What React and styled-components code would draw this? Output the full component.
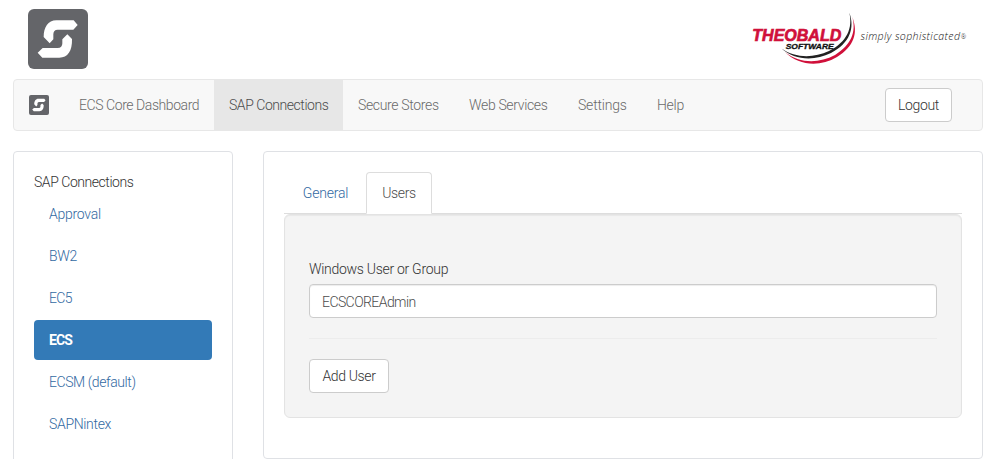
import React from "react";
import styled, { createGlobalStyle, css } from "styled-components";

const GlobalStyle = createGlobalStyle`
  *, *::before, *::after { box-sizing: border-box; }
  body {
    margin: 0;
    background: #fff;
    color: #333;
    font-family: "Roboto", "Liberation Sans", sans-serif;
    font-size: 14px;
    font-weight: 300;
    line-height: 20px;
    overflow: hidden;
  }
`;

const Page = styled.div`
  width: 970px;
  height: 459px;
  margin-left: 13px;
  overflow: hidden;
`;

const Header = styled.header`
  display: flex;
  justify-content: space-between;
  height: 79px;
  padding: 9px 0 0 15px;
`;

const LogoSvg = styled.svg`
  display: block;
  flex: none;
  width: ${(p) => p.$size}px;
  height: ${(p) => p.$size}px;
`;

const BrandSvg = styled.svg`
  display: block;
  width: 233px;
  height: 62px;
`;

const Label = styled.span`
  letter-spacing: ${(p) => p.$track || 0}px;
  white-space: nowrap;
`;

const NavBar = styled.nav`
  display: flex;
  align-items: stretch;
  height: 52px;
  padding: 0 30px 0 15px;
  border: 1px solid #e7e7e7;
  border-radius: 4px;
  background: #f8f8f8;
`;

const NavBrand = styled.a`
  display: flex;
  align-items: center;
  width: 35px;
`;

const NavItem = styled.a`
  display: flex;
  align-items: center;
  width: ${(p) => p.$width}px;
  padding-left: 15px;
  color: ${(p) => (p.$active ? "#4c4c4c" : "#6a6a6a")};
  background: ${(p) => (p.$active ? "#e7e7e7" : "transparent")};
`;

const Button = styled.button`
  height: 34px;
  width: ${(p) => p.$width}px;
  padding: 0;
  border: 1px solid #ccc;
  border-radius: 4px;
  background: #fff;
  color: #333;
  font: inherit;
`;

const LogoutButton = styled(Button)`
  margin: 8px 0 0 auto;
`;

const Columns = styled.div`
  display: flex;
  align-items: flex-start;
  gap: 30px;
  padding-top: 20px;
`;

const panel = css`
  border: 1px solid #dfe1e5;
  border-radius: 4px;
  background: #fff;
`;

const Sidebar = styled.aside`
  ${panel}
  width: 220px;
  height: 340px;
  padding: 20px;
`;

const SidebarTitle = styled.div`
  height: 22px;
`;

const SideItem = styled.a`
  display: flex;
  align-items: center;
  height: 40px;
  margin-bottom: 2px;
  padding-left: 15px;
  border-radius: 4px;
  color: ${(p) => (p.$active ? "#fff" : "#3269a2")};
  background: ${(p) => (p.$active ? "#337ab7" : "transparent")};
  font-weight: ${(p) => (p.$active ? 700 : 300)};
`;

const Main = styled.main`
  ${panel}
  width: 720px;
  height: 308px;
  padding: 20px;
`;

const Tabs = styled.div`
  display: flex;
  height: 42px;
  padding-left: 1px;
  border-bottom: 1px solid #ddd;
`;

const Tab = styled.a`
  display: flex;
  align-items: center;
  justify-content: center;
  height: 42px;
  width: ${(p) => p.$width}px;
  border: 1px solid transparent;
  border-radius: 4px 4px 0 0;
  color: #3269a2;
  ${(p) =>
    p.$active &&
    css`
      color: #4c4c4c;
      background: #fff;
      border-color: #ddd #ddd #fff;
    `}
`;

const Well = styled.section`
  height: 204px;
  padding: 44px 24px 24px;
  border: 1px solid #e3e3e3;
  border-radius: 6px;
  background: #f4f4f4;
  box-shadow: inset 0 1px 1px rgba(0, 0, 0, 0.05);
`;

const FieldLabel = styled.label`
  display: block;
  margin-bottom: 5px;
`;

const Input = styled.input`
  display: block;
  width: 100%;
  height: 34px;
  padding: 2px 12px 0;
  border: 1px solid #ccc;
  border-radius: 4px;
  background: #fff;
  box-shadow: inset 0 1px 1px rgba(0, 0, 0, 0.075);
  color: #4c4c4c;
  font: inherit;
  letter-spacing: -0.58px;
`;

const Divider = styled.hr`
  margin: 20px 0;
  border: 0;
  border-top: 1px solid #ececec;
`;

function Logo({ size }) {
  return (
    <LogoSvg $size={size} viewBox="0 0 180 180" aria-label="ECS Core">
      <rect width="180" height="180" rx="18" fill="#646569" />
      <g fill="#fff">
        <path d="M65 103 L47 84 C47 55 60 34 85 34 H137 L149 48 L136 62 H89 Q76 62 76 76 V91 Z" />
        <path d="M118 76 L132 90 C133 126 119 146 94 146 H43 L29 131 L44 117 H89 Q103 117 103 103 V91 Z" />
      </g>
    </LogoSvg>
  );
}

function TheobaldBrand() {
  return (
    <BrandSvg viewBox="750 9 233 62" aria-label="Theobald Software">
      <path
        d="M849.3 12.5 C855 28 850 43 831 53 C814 61.5 794 60 781.5 48.5 C795 58 813 58.5 829 51 C847 42 853 28 849.3 12.5Z"
        fill="#222"
      />
      <path
        d="M852.3 17 C858.5 33 854 46.5 837 57 C820 67 799 66 785 52 C800 64 819 63.5 835 55 C851 45 856.5 32 852.3 17Z"
        fill="#d0103a"
      />
      <g fontFamily="Liberation Sans" fontWeight="700" fontStyle="italic">
        <text x="752.3" y="41.2" fontSize="16.5" fill="#d0103a" stroke="#d0103a" strokeWidth="0.7" textLength="89" lengthAdjust="spacingAndGlyphs">
          THEOBALD
        </text>
        <text x="785.7" y="49.1" fontSize="7" fill="#111" stroke="#111" strokeWidth="0.3" textLength="48" lengthAdjust="spacingAndGlyphs">
          SOFTWARE
        </text>
      </g>
      <g fontFamily="Open Sans" fontStyle="italic" fill="#111">
        <text x="860.5" y="40.2" fontSize="10.6" textLength="99.5">
          simply sophisticated
        </text>
        <text x="960.8" y="38.5" fontSize="6.5">®</text>
      </g>
    </BrandSvg>
  );
}

const navItems = [
  { text: "ECS Core Dashboard", width: 150, track: -0.43 },
  { text: "SAP Connections", width: 129, track: -0.45, active: true },
  { text: "Secure Stores", width: 111, track: -0.34 },
  { text: "Web Services", width: 109, track: -0.34 },
  { text: "Settings", width: 79, track: -0.2 },
  { text: "Help", width: 57, track: -0.3 },
];

const connections = [
  { text: "Approval", track: -0.25 },
  { text: "BW2", track: -0.3 },
  { text: "EC5", track: -0.7 },
  { text: "ECS", track: -0.9, active: true },
  { text: "ECSM (default)", track: -0.42 },
  { text: "SAPNintex", track: -0.33 },
];

export default function App() {
  return (
    <>
      <GlobalStyle />
      <Page>
        <Header>
          <Logo size={60} />
          <TheobaldBrand />
        </Header>
        <NavBar>
          <NavBrand>
            <Logo size={20} />
          </NavBrand>
          {navItems.map((item) => (
            <NavItem key={item.text} $width={item.width} $active={item.active}>
              <Label $track={item.track}>{item.text}</Label>
            </NavItem>
          ))}
          <LogoutButton $width={67}>
            <Label $track={-0.35}>Logout</Label>
          </LogoutButton>
        </NavBar>
        <Columns>
          <Sidebar>
            <SidebarTitle>
              <Label $track={-0.45}>SAP Connections</Label>
            </SidebarTitle>
            {connections.map((item) => (
              <SideItem key={item.text} $active={item.active}>
                <Label $track={item.track}>{item.text}</Label>
              </SideItem>
            ))}
          </Sidebar>
          <Main>
            <Tabs>
              <Tab $width={81}>
                <Label $track={-0.2}>General</Label>
              </Tab>
              <Tab $width={66} $active>
                <Label $track={-0.4}>Users</Label>
              </Tab>
            </Tabs>
            <Well>
              <FieldLabel htmlFor="account">
                <Label $track={-0.29}>Windows User or Group</Label>
              </FieldLabel>
              <Input id="account" defaultValue="ECSCOREAdmin" />
              <Divider />
              <Button $width={80}>
                <Label $track={-0.35}>Add User</Label>
              </Button>
            </Well>
          </Main>
        </Columns>
      </Page>
    </>
  );
}
